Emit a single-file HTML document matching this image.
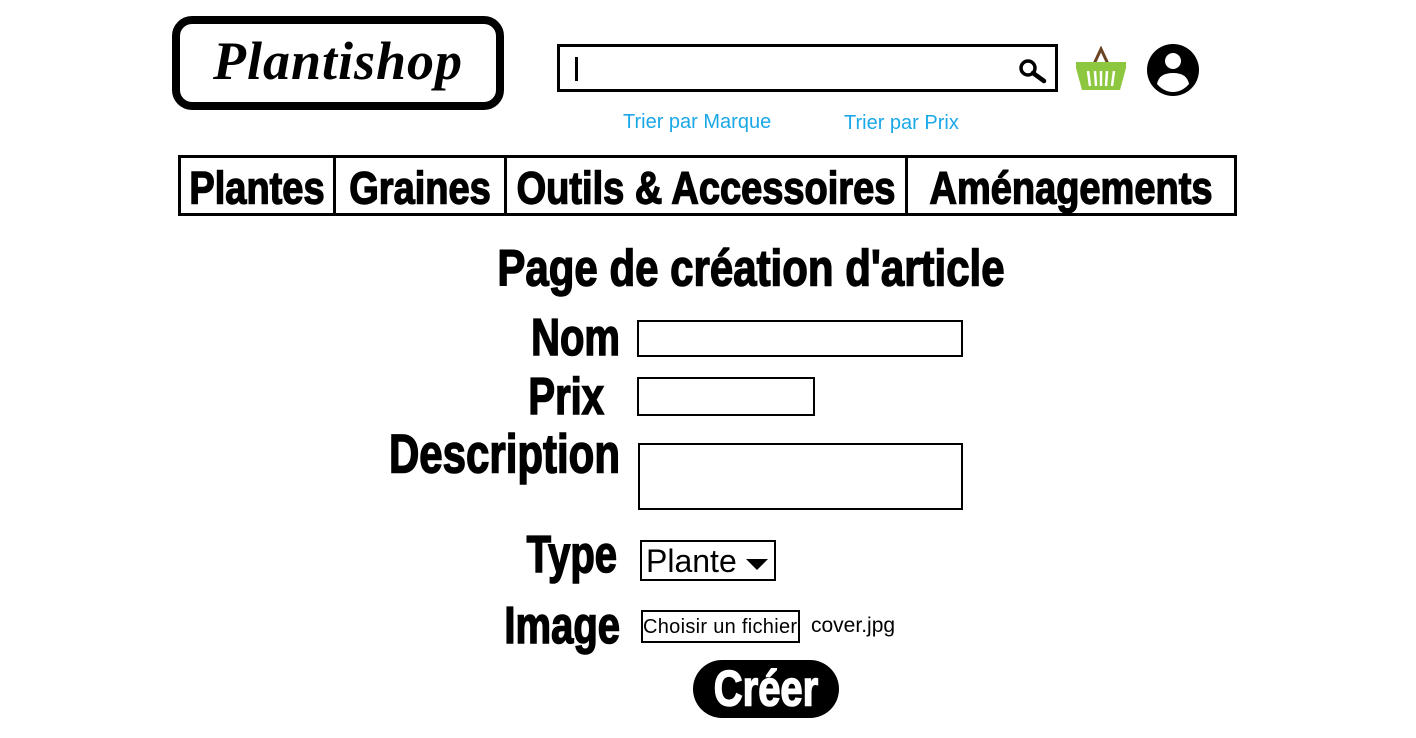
<!DOCTYPE html>
<html><head><meta charset="utf-8"><style>
body{margin:0;width:1416px;height:738px;background:#fff;position:relative;overflow:hidden;font-family:"Liberation Sans",sans-serif}
.a{position:absolute}
.imp{font-family:"Liberation Sans Narrow","Liberation Sans",sans-serif;font-weight:bold;line-height:1;white-space:nowrap;-webkit-text-stroke:1.2px #000}
.lab{position:absolute;right:796px;font-size:40px;transform:scaleY(1.3);transform-origin:right top}
.nav{position:absolute;top:155px;height:55px;border:3px solid #000;}
.cell{position:absolute;top:0;height:55px;border-right:3px solid #000;display:flex;align-items:center;justify-content:center;font-size:38px;}
.cell span{display:inline-block;transform:translateY(3px) scaleY(1.2)}
.inp{position:absolute;border:2px solid #000;box-sizing:border-box}
.seg{font-family:"Liberation Sans","DejaVu Sans",sans-serif}
</style></head><body>
<div class="a" style="left:172px;top:16px;width:316px;height:78px;border:8px solid #000;border-radius:20px;"></div>
<div class="a" style="left:172px;top:30px;width:332px;text-align:center;font-family:'Liberation Serif',serif;font-style:italic;font-weight:bold;font-size:54px;letter-spacing:1px">Plantishop</div>

<div class="a" style="left:557px;top:44px;width:495px;height:42px;border:3px solid #000"></div>
<div class="a" style="left:575px;top:57px;width:3px;height:24px;background:#000"></div>
<svg class="a" style="left:1018px;top:58px" width="30" height="26" viewBox="0 0 30 26"><circle cx="10" cy="10" r="7" fill="none" stroke="#000" stroke-width="3.5"/><path d="M15 15 L26 23" stroke="#000" stroke-width="4.5" stroke-linecap="round"/></svg>

<svg class="a" style="left:1074px;top:46px" width="54" height="48" viewBox="0 0 54 48"><path d="M20 18 L27 3 L34 18" fill="none" stroke="#6b4423" stroke-width="3"/><path d="M2 16 H52 V22 L46 44 H8 L2 22 Z" fill="#8dc63f"/><path d="M14 25 L16 40 M21 25 L22 40 M27 25 V40 M33 25 L32 40 M40 25 L38 40" stroke="#fff" stroke-width="2.5"/></svg>

<svg class="a" style="left:1145px;top:42px" width="56" height="56" viewBox="0 0 56 56"><circle cx="28" cy="28" r="26" fill="#000"/><circle cx="28" cy="19" r="8" fill="#fff"/><path d="M12 42 Q14 31 28 31 Q42 31 44 42 Q37 50 28 50 Q19 50 12 42Z" fill="#fff"/></svg>

<div class="a seg" style="left:623px;top:111px;font-size:20px;color:#1aa8e8">Trier par Marque</div>
<div class="a seg" style="left:844px;top:112px;font-size:20px;color:#1aa8e8">Trier par Prix</div>

<div class="nav imp" style="left:178px;width:1053px">
<div class="cell" style="left:0;width:152px"><span>Plantes</span></div>
<div class="cell" style="left:155px;width:168px"><span>Graines</span></div>
<div class="cell" style="left:326px;width:398px"><span>Outils &amp; Accessoires</span></div>
<div class="cell" style="left:727px;width:326px;border-right:none"><span>Aménagements</span></div>
</div>

<div class="a imp" style="left:0;width:1502px;text-align:center;top:243px;font-size:42px;transform:scaleY(1.22);transform-origin:center top">Page de création d'article</div>

<div class="lab imp" style="top:312px">Nom</div>
<div class="inp" style="left:637px;top:320px;width:326px;height:37px"></div>
<div class="lab imp" style="top:371px;right:812px">Prix</div>
<div class="inp" style="left:637px;top:377px;width:178px;height:39px"></div>
<div class="lab imp" style="top:427px;font-size:42px">Description</div>
<div class="inp" style="left:638px;top:443px;width:325px;height:67px"></div>
<div class="lab imp" style="top:529px;right:799px">Type</div>
<div class="inp seg" style="left:640px;top:540px;width:136px;height:41px;font-size:32px;padding-left:4px;line-height:38px">Plante</div>
<svg class="a" style="left:746px;top:559px" width="22" height="12"><path d="M0 0 H22 L11 11Z" fill="#000"/></svg>
<div class="lab imp" style="top:600px">Image</div>
<div class="inp seg" style="left:641px;top:610px;width:159px;height:33px;font-size:20px;line-height:31px;text-align:left;padding-left:0;white-space:nowrap;overflow:hidden;letter-spacing:0.3px">Choisir un fichier</div>
<div class="a seg" style="left:811px;top:614px;font-size:21px">cover.jpg</div>

<div class="a imp" style="left:693px;top:660px;width:146px;height:58px;background:#000;color:#fff;-webkit-text-stroke:1.2px #fff;border-radius:29px;display:flex;align-items:center;justify-content:center;font-size:40px"><span style="display:inline-block;transform:scaleY(1.25)">Créer</span></div>
</body></html>
